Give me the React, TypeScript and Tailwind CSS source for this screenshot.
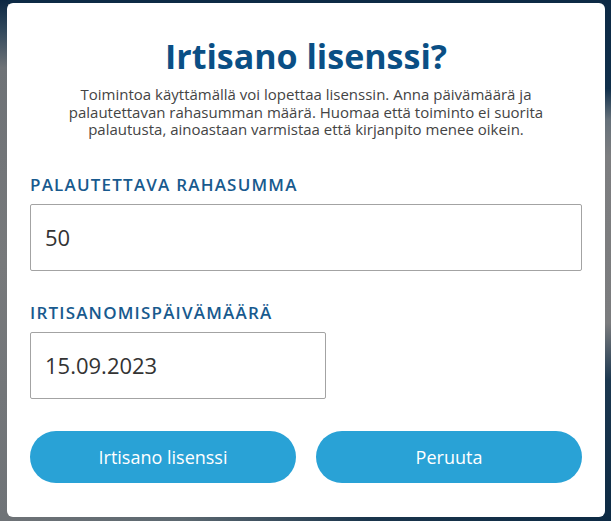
export default function App() {
  return (
    <div className="w-[611px] h-[521px] overflow-hidden pt-[3px] pl-[7px] [background:linear-gradient(180deg,#0d2a45_0%,#102f4b_17%,#66717a_23%,#7d7e80_30%,#7b7c7e_62%,#1c3850_73%,#0d2a44_100%)_right_top/8px_100%_no-repeat,linear-gradient(180deg,#0c2742_0%,#33495c_6%,#6e7276_13%,#77797b_50%,#6f7377_100%)_left_top/8px_100%_no-repeat,linear-gradient(180deg,#0d2a45_0px,#0d2a45_4px,transparent_4px),linear-gradient(90deg,#6f7377_0%,#5c6870_30%,#1a354c_60%,#0d2a44_100%)] font-['Open_Sans',sans-serif]">
      <div className="w-[598px] h-[514px] bg-white rounded-[6px] px-[23px] pt-[31px] pb-[34px] flex flex-col">
        <h1 className="text-center text-[34px] leading-[44px] font-bold text-[#0a4f85]">
          Irtisano lisenssi?
        </h1>
        <p className="mt-[8px] w-[530px] mx-auto text-center text-[15px] leading-[17.5px] text-[#444444]">
          Toimintoa käyttämällä voi lopettaa lisenssin. Anna päivämäärä ja palautettavan rahasumman määrä. Huomaa että toiminto ei suorita palautusta, ainoastaan varmistaa että kirjanpito menee oikein.
        </p>

        <label className="mt-[34px] text-[17px] leading-[24px] font-semibold tracking-[1.2px] text-[#185a8e]">
          PALAUTETTAVA RAHASUMMA
        </label>
        <div className="mt-[7px] h-[67px] border border-[#a3a3a3] rounded-[2px] flex items-center px-[14px] text-[22px] text-[#333333]">
          50
        </div>

        <label className="mt-[30px] text-[17px] leading-[24px] font-semibold tracking-[1.2px] text-[#185a8e]">
          IRTISANOMISPÄIVÄMÄÄRÄ
        </label>
        <div className="mt-[7px] w-[296px] h-[67px] border border-[#a3a3a3] rounded-[2px] flex items-center px-[14px] text-[22px] text-[#333333]">
          15.09.2023
        </div>

        <div className="mt-auto flex gap-[20px]">
          <button className="flex-1 h-[52px] rounded-full bg-[#29a2d6] text-white text-[18px]">
            Irtisano lisenssi
          </button>
          <button className="flex-1 h-[52px] rounded-full bg-[#29a2d6] text-white text-[18px]">
            Peruuta
          </button>
        </div>
      </div>
    </div>
  )
}
